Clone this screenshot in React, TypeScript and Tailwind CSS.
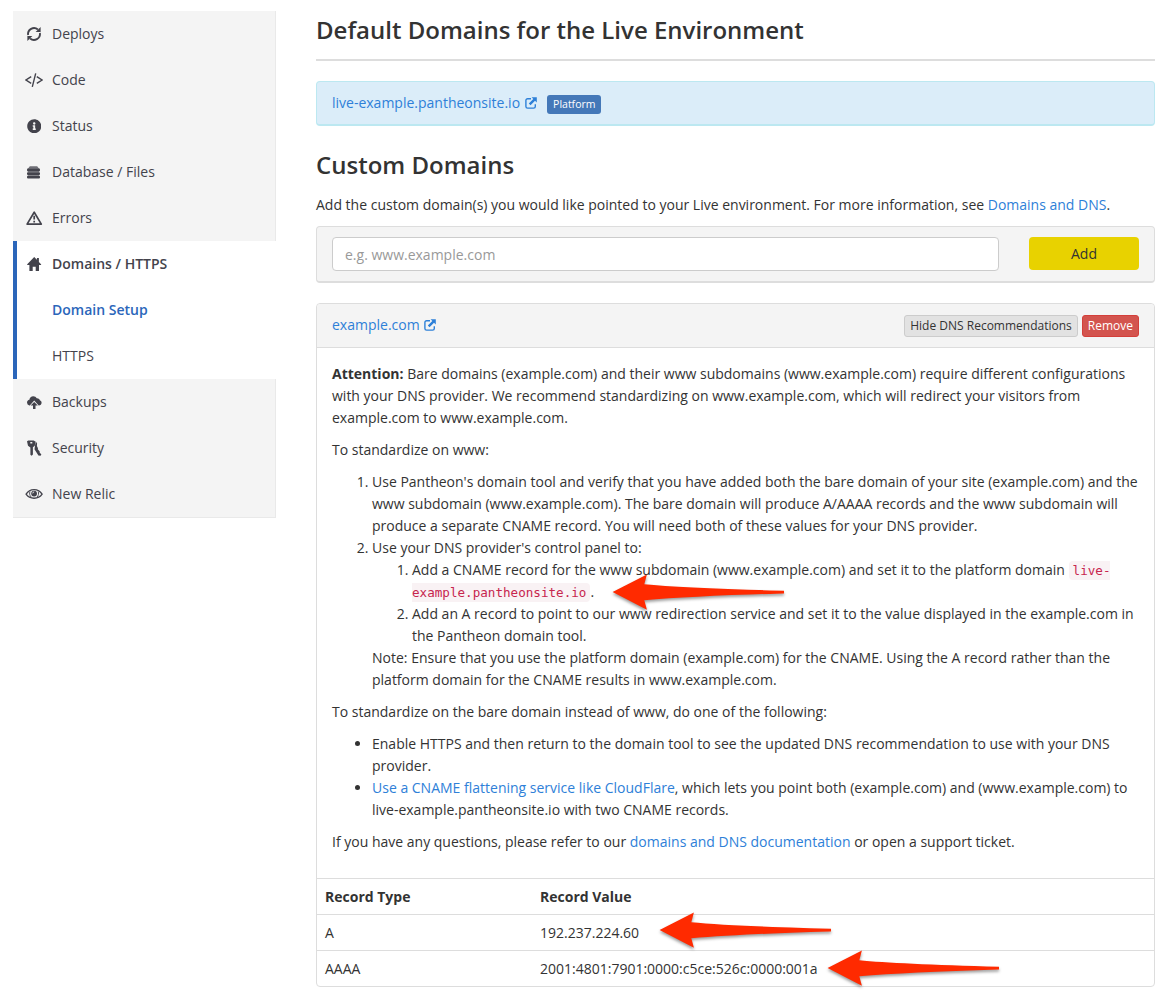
import type { ReactNode } from 'react';
import { FaInfoCircle } from 'react-icons/fa';

function RefreshIcon() {
  return (
    <svg viewBox="0 0 18 18" className="h-[18px] w-[18px]" fill="none" stroke="currentColor" strokeWidth="1.9">
      <path d="M3.1 10A6 6 0 0 1 12.900 4.500" />
      <path d="M14.900 8A6 6 0 0 1 5.100 13.500" />
      <path d="M15.600 2.100v5h-5z" fill="currentColor" stroke="none" />
      <path d="M2.400 15.900v-5h5z" fill="currentColor" stroke="none" />
    </svg>
  );
}

function CodeIcon() {
  return (
    <svg viewBox="0 0 18 18" className="h-[18px] w-[18px]" fill="none" stroke="currentColor" strokeWidth="1.4">
      <path d="M6.2 5.7 1 9l5.2 3.3M11.8 5.7 17 9l-5.2 3.3M10.7 2.3 7.3 15.9" />
    </svg>
  );
}

function DatabaseIcon() {
  return (
    <svg viewBox="0 0 18 18" className="h-[18px] w-[18px]" fill="currentColor">
      <path d="M4.8 3.2h7.4l1.500 2H3.300z" opacity=".75" />
      <rect x="2" y="5.6" width="13" height="2.8" rx="1.1" />
      <rect x="2" y="9.2" width="13" height="2.8" rx="1.1" />
      <rect x="2" y="12.800" width="13" height="2.8" rx="1.1" />
      <path d="M2.8 5h11.400v1H2.800zM2.800 8h11.400v1.400H2.800zM2.800 11.600h11.400V13H2.800z" opacity=".5" />
    </svg>
  );
}

function WarningIcon() {
  return (
    <svg viewBox="0 0 18 18" className="h-[18px] w-[18px]" fill="none" stroke="currentColor" strokeWidth="1.7">
      <path d="M9.2 3.2 2.1 15.1h14.200z" strokeLinejoin="round" />
      <path d="M9.2 6.8v3.8M9.2 11.8v1.7" />
    </svg>
  );
}

function HomeIcon() {
  return (
    <svg viewBox="0 0 18 18" className="h-[18px] w-[18px]" fill="currentColor">
      <path d="M9.2 2 2 9.4l.5.7h1.9v5.8h3.3v-4.2h3v4.2H14v-5.8h1.8l.5-.7-2.4-2.5V3h-2v1.8z" />
    </svg>
  );
}

function CloudIcon() {
  return (
    <svg viewBox="0 0 18 18" className="h-[18px] w-[18px]" fill="currentColor">
      <path d="M4.8 12.4H4.4A2.9 2.9 0 0 1 2 9.6c0-1.5 1-2.6 2.4-2.9C4.7 4.500 6.200 3.200 8.200 3.200c1.700 0 2.900.8 3.500 2.100 1.900-.1 3.100 1 3.300 2.300 1 .4 1.600 1.100 1.600 2.100 0 1.600-1.200 2.700-2.700 2.700h-.2L9.200 7.600z" />
      <path d="m9.200 8.900 3.600 3.700h-2.300V16H8v-3.400H5.600z" />
    </svg>
  );
}

function KeysIcon() {
  return (
    <svg viewBox="0 0 18 18" className="h-[18px] w-[18px]" fill="currentColor">
      <path fillRule="evenodd" d="M2 2.300 3.300 1.600h5.400l1.600.9-.5 4.300-1.900 1.500v7.200l-1.300 1.300-1.200-1V8.600L3 6.700zM5.300 2.900v1.500h2V2.900z" />
      <path d="m10.700 2.200 1.400 2.400-.2 2.500 1.100 2.100-.2 1.100 1.900 2.100-.1 1 1.800 2.200-.9 1.200-2.100-.4-3.900-6.200z" />
    </svg>
  );
}

function EyeIcon() {
  return (
    <svg viewBox="0 0 18 18" className="h-[18px] w-[18px]" fill="none" stroke="currentColor" strokeWidth="1.35">
      <path d="M1.100 9.200C4.800 3.100 13.400 3.100 17.100 9.200 13.400 14.600 4.800 14.600 1.100 9.200z" />
      <circle cx="9.100" cy="8.600" r="2.900" fill="currentColor" stroke="none" />
      <path d="M7.700 8.400a1.500 1.500 0 0 1 1.500-1.500" stroke="#f4f4f4" strokeWidth=".9" />
      <path d="M5 6.400c-.8 2.200-.3 4.200 1.200 5.700M13.200 6.400c.8 2.200.3 4.200-1.200 5.700" strokeWidth=".9" />
    </svg>
  );
}

function ExternalIcon({ className }: { className: string }) {
  return (
    <svg viewBox="0 0 12 12" className={className}>
      <path d="M6 1.700H2.600A1.700 1.700 0 0 0 .9 3.400v6a1.700 1.700 0 0 0 1.700 1.700h6a1.700 1.700 0 0 0 1.700-1.700V7.200" fill="none" stroke="currentColor" strokeWidth="1.400" />
      <path d="M6.600.3h5.200v5.200L10 3.800 5.500 8.300 3.800 6.600l4.500-4.500z" fill="currentColor" />
    </svg>
  );
}

function NavItem({ icon, label }: { icon: ReactNode; label: string }) {
  return (
    <li className="flex h-[46px] items-center border-r border-[#e9e9e9] bg-[#f4f4f4] pl-3">
      <span className="flex w-[18px] justify-center">{icon}</span>
      <span className="ml-[9px]">{label}</span>
    </li>
  );
}

function Arrow({ className }: { className: string }) {
  return (
    <svg viewBox="0 0 180 44" className={className}>
      <path
        d="M.6 18 34.900.500 32.300 10.200Q70 14 172 16.700V19.400Q80 22 32.300 26.300L34.900 35.700Z"
        fill="#ff2a00"
      />
    </svg>
  );
}

const link = 'text-[#2e80d8]';

export default function App() {
  return (
    <div className="relative flex min-h-[993px] w-[1161px] items-start bg-white pl-[13px] font-['Open_Sans',sans-serif] text-sm/[22px] text-[#333]">
      <nav className="mt-[11px] w-[263px] shrink-0 text-[#43434c]">
        <ul className="border-b border-[#e9e9e9]">
          <NavItem icon={<RefreshIcon />} label="Deploys" />
          <NavItem icon={<CodeIcon />} label="Code" />
          <NavItem icon={<FaInfoCircle className="h-[14.500px] w-[14.500px]" />} label="Status" />
          <NavItem icon={<DatabaseIcon />} label="Database / Files" />
          <NavItem icon={<WarningIcon />} label="Errors" />
          <li className="border-l-4 border-[#2b66ba]">
            <div className="flex h-[46px] items-center pl-2 font-semibold">
              <HomeIcon />
              <span className="ml-[9px]">Domains / HTTPS</span>
            </div>
            <ul className="pl-[35px]">
              <li className="flex h-[46px] items-center font-semibold text-[#2b66ba]">Domain Setup</li>
              <li className="flex h-[46px] items-center">HTTPS</li>
            </ul>
          </li>
          <NavItem icon={<CloudIcon />} label="Backups" />
          <NavItem icon={<KeysIcon />} label="Security" />
          <NavItem icon={<EyeIcon />} label="New Relic" />
        </ul>
      </nav>

      <main className="ml-10 w-[839px] shrink-0">
        <h1 className="h-[61px] border-b-2 border-[#ddd] pt-[13px] text-2xl/[33px] font-semibold">
          Default Domains for the Live Environment
        </h1>

        <div className="mt-5 flex h-[45px] items-center rounded border border-b-2 border-[#bce8f1] bg-[#dbedf9] pl-[15px]">
          <a className={link}>live-example.pantheonsite.io</a>
          <ExternalIcon className="ml-[5px] h-3 w-3 text-[#2e80d8]" />
          <span className="mt-[2px] ml-[10px] h-[19px] rounded-[3px] bg-[#4478b8] px-[6px] text-[10.500px]/[19px] text-white">
            Platform
          </span>
        </div>

        <h2 className="mt-[22px] text-2xl/[33px] font-semibold">Custom Domains</h2>
        <p className="mt-[13px]">
          Add the custom domain(s) you would like pointed to your Live environment. For more information, see{' '}
          <a className={link}>Domains and DNS</a>.
        </p>

        <form className="mt-[10px] flex h-[57px] justify-between rounded border border-b-2 border-[#ddd] bg-[#f4f4f4] px-[15px] pt-[10px]">
          <input
            className="h-[34px] w-[667px] rounded border border-[#ccc] bg-white px-3 placeholder:text-[#999]"
            placeholder="e.g. www.example.com"
          />
          <button type="button" className="h-[33px] w-[110px] rounded bg-[#e8d200]">
            Add
          </button>
        </form>

        <section className="mt-5 rounded border border-[#ddd]">
          <header className="flex h-11 items-center rounded-t border-b border-[#ddd] bg-[#f4f4f4] px-[15px]">
            <div className="flex items-center pb-[2px]">
              <a className={link}>example.com</a>
              <ExternalIcon className="ml-1 h-3 w-3 text-[#2e80d8]" />
            </div>
            <button className="mt-px ml-auto h-[22px] rounded-[3px] border border-[#ccc] bg-[#e2e2e2] px-[5px] text-xs/[18px]">
              Hide DNS Recommendations
            </button>
            <button className="mt-px ml-1 h-[22px] rounded-[3px] border border-[#d43f3a] bg-[#d3544e] px-[5px] text-xs/[18px] text-white">
              Remove
            </button>
          </header>

          <div className="px-[15px] pt-[15px] pb-[25px]">
            <p>
              <b>Attention:</b> Bare domains (example.com) and their www subdomains (www.example.com) require different
              configurations with your DNS provider. We recommend standardizing on www.example.com, which will redirect
              your visitors from example.com to www.example.com.
            </p>
            <p className="mt-[10px]">To standardize on www:</p>
            <ol className="mt-[10px] list-decimal pl-10">
              <li>
                Use Pantheon's domain tool and verify that you have added both the bare domain of your site
                (example.com) and the www subdomain (www.example.com). The bare domain will produce A/AAAA records and
                the www subdomain will produce a separate CNAME record. You will need both of these values for your DNS
                provider.
              </li>
              <li>
                Use your DNS provider's control panel to:
                <ol className="list-decimal pl-10">
                  <li>
                    Add a CNAME record for the www subdomain (www.example.com) and set it to the platform domain{' '}
                    <code className="rounded bg-[#f9f2f4] px-1 py-[2px] font-['DejaVu_Sans_Mono',monospace] text-[12.600px] leading-none text-[#c7254e]">
                      live-example.pantheonsite.io
                    </code>
                    .
                  </li>
                  <li>
                    Add an A record to point to our www redirection service and set it to the value displayed in the
                    example.com in the Pantheon domain tool.
                  </li>
                </ol>
                Note: Ensure that you use the platform domain (example.com) for the CNAME. Using the A record rather
                than the platform domain for the CNAME results in www.example.com.
              </li>
            </ol>
            <p className="mt-[10px]">To standardize on the bare domain instead of www, do one of the following:</p>
            <ul className="mt-[10px] list-disc pl-10">
              <li>
                Enable HTTPS and then return to the domain tool to see the updated DNS recommendation to use with your
                DNS provider.
              </li>
              <li>
                <a className={link}>Use a CNAME flattening service like CloudFlare</a>, which lets you point both
                (example.com) and (www.example.com) to live-example.pantheonsite.io with two CNAME records.
              </li>
            </ul>
            <p className="mt-[10px]">
              If you have any questions, please refer to our <a className={link}>domains and DNS documentation</a> or
              open a support ticket.
            </p>
          </div>

          <div className="grid grid-cols-[215px_1fr]">
            <b className="h-9 border-t border-[#ddd] pt-[7px] pl-2">Record Type</b>
            <b className="h-9 border-t border-[#ddd] pt-[7px] pl-2">Record Value</b>
            <span className="h-9 border-t border-[#ddd] pt-[7px] pl-2">A</span>
            <span className="h-9 border-t border-[#ddd] pt-[7px] pl-2">192.237.224.60</span>
            <span className="h-9 border-t border-[#ddd] pt-[7px] pl-2">AAAA</span>
            <span className="h-9 border-t border-[#ddd] pt-[7px] pl-2">2001:4801:7901:0000:c5ce:526c:0000:001a</span>
          </div>
        </section>
      </main>

      <Arrow className="absolute top-[574px] left-[612px] h-[44px] w-[180px] drop-shadow-[0_2px_1.5px_rgba(0,0,0,0.4)]" />
      <Arrow className="absolute top-[912px] left-[659px] h-[44px] w-[180px] drop-shadow-[0_2px_1.5px_rgba(0,0,0,0.4)]" />
      <Arrow className="absolute top-[950px] left-[827px] h-[44px] w-[180px] drop-shadow-[0_2px_1.5px_rgba(0,0,0,0.4)]" />
    </div>
  );
}
